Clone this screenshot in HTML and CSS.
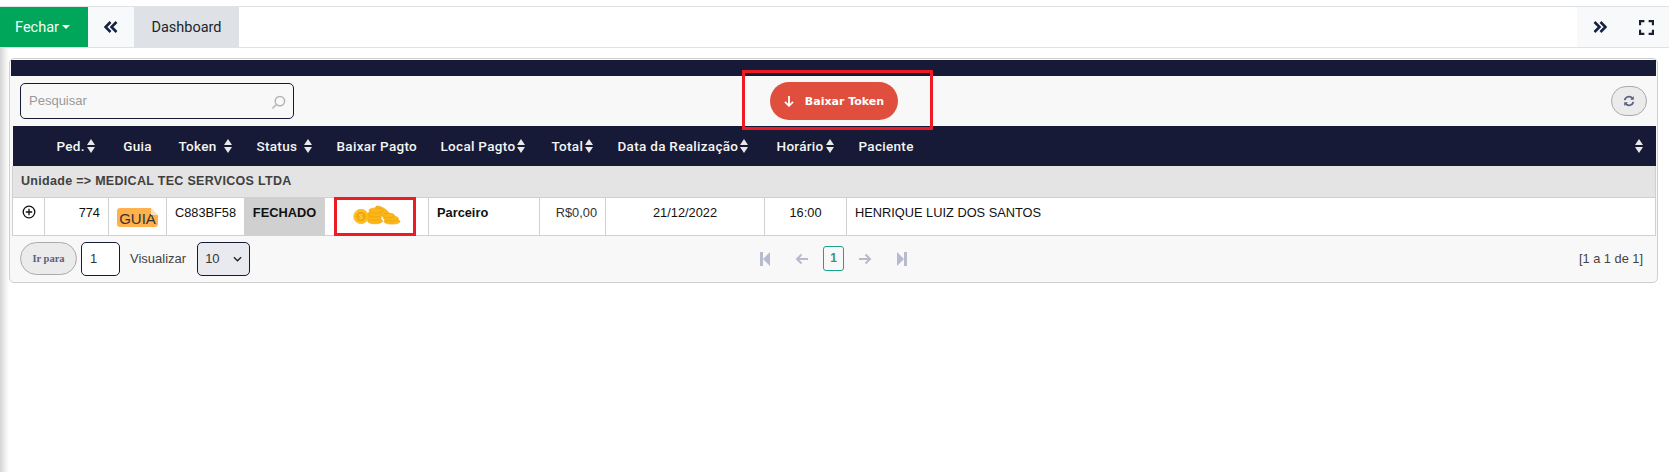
FILE: index.html
```html
<!DOCTYPE html>
<html>
<head>
    <title>Dashboard</title>
    <link rel="stylesheet" href="styles.css">
</head>
<body>
    <!-- Top tabs -->
    <div class="tab-bar">
        <div class="tab-close">Fechar<span class="caret"></span></div>
        <div class="tab-nav">
            <svg class="chevrons" viewBox="0 0 14 12"><path d="M6.5 1 1.5 6l5 5M12.5 1l-5 5 5 5" /></svg>
        </div>
        <div class="tab-active">Dashboard</div>
        <div class="tab-tools">
            <svg class="chevrons" viewBox="0 0 14 12"><path d="M1.5 1l5 5-5 5M7.5 1l5 5-5 5" /></svg>
            <svg class="expand" viewBox="0 0 14 14"><path d="M1 5V1h4M9 1h4v4M13 9v4H9M5 13H1V9" /></svg>
        </div>
    </div>

    <div class="content">
        <div class="panel">
            <div class="panel-strip"></div>

            <!-- Toolbar -->
            <div class="toolbar">
                <div class="search">
                    <span class="search-text">Pesquisar</span>
                    <svg class="search-icon" viewBox="0 0 16 16"><circle cx="9.5" cy="6.5" r="5" /><path d="M5.8 10.2 1.5 14.5" /></svg>
                </div>
                <div class="token-button">
                    <svg class="token-arrow" viewBox="0 0 12 12"><path d="M6 1v9.5M2 6.8l4 4 4-4" /></svg>
                    Baixar Token
                </div>
                <div class="refresh-button">
                    <svg viewBox="0 0 14 14"><path d="M2 6a5 5 0 0 1 9-2M12 8a5 5 0 0 1-9 2" /><path class="solid" d="M12.6 1.2v4.2H8.4zM1.4 12.8V8.6h4.2z" /></svg>
                </div>
            </div>

            <!-- Table -->
            <table class="grid">
                <colgroup>
                    <col class="c-exp"><col class="c-ped"><col class="c-guia"><col class="c-token"><col class="c-status">
                    <col class="c-baixar"><col class="c-local"><col class="c-total"><col class="c-data"><col class="c-hora"><col>
                </colgroup>
                <thead>
                    <tr>
                        <th></th>
                        <th><div class="th-in">Ped.<span class="sort"></span></div></th>
                        <th class="th-center">Guia</th>
                        <th><div class="th-in">Token<span class="sort wide"></span></div></th>
                        <th><div class="th-in">Status<span class="sort wide"></span></div></th>
                        <th>Baixar Pagto</th>
                        <th><div class="th-in">Local Pagto<span class="sort"></span></div></th>
                        <th><div class="th-in">Total<span class="sort"></span></div></th>
                        <th><div class="th-in">Data da Realização<span class="sort"></span></div></th>
                        <th><div class="th-in">Horário<span class="sort"></span></div></th>
                        <th><div class="th-in th-last">Paciente<span class="sort"></span></div></th>
                    </tr>
                </thead>
                <tbody>
                    <tr class="group-row">
                        <td colspan="11">Unidade =&gt; MEDICAL TEC SERVICOS LTDA</td>
                    </tr>
                    <tr class="data-row">
                        <td class="expand-cell">
                            <svg viewBox="0 0 14 14"><circle cx="7" cy="7" r="5.8" /><path d="M3.8 7h6.4M7 3.8v6.4" /></svg>
                        </td>
                        <td class="right">774</td>
                        <td class="guia-cell"><span class="guia-icon">GUIA</span></td>
                        <td class="center">C883BF58</td>
                        <td class="status-cell">FECHADO</td>
                        <td class="coins-cell">
                            <svg viewBox="0 0 48 20">
                                <g fill="#fbb716" stroke="#eb9c0c" stroke-width=".6">
                                    <ellipse cx="39" cy="16.5" rx="8" ry="2.6" />
                                    <ellipse cx="38" cy="13.5" rx="7.5" ry="2.6" />
                                    <ellipse cx="35" cy="10.5" rx="6.5" ry="2.4" />
                                    <ellipse cx="29" cy="5" rx="7" ry="2.4" transform="rotate(28 29 5)" />
                                    <ellipse cx="22" cy="16" rx="7.5" ry="2.8" />
                                    <ellipse cx="21" cy="12.5" rx="7.5" ry="2.8" />
                                    <ellipse cx="22" cy="9" rx="7.5" ry="2.8" />
                                    <ellipse cx="23" cy="5.5" rx="7" ry="2.6" />
                                    <circle cx="8" cy="11.5" r="7.2" fill="#fdc01c" stroke="#f5a90f" />
                                </g>
                                <circle cx="8" cy="11.5" r="4.8" fill="#f2a60c" />
                                <text class="coin-mark" x="8" y="14.3" text-anchor="middle">$</text>
                            </svg>
                        </td>
                        <td class="bold">Parceiro</td>
                        <td class="right money">R$0,00</td>
                        <td class="center">21/12/2022</td>
                        <td class="center">16:00</td>
                        <td>HENRIQUE LUIZ DOS SANTOS</td>
                    </tr>
                </tbody>
            </table>

            <!-- Pagination -->
            <div class="pager-row">
                <div class="pager-left">
                    <div class="go-button">Ir para</div>
                    <div class="page-input">1</div>
                    <span class="view-label">Visualizar</span>
                    <div class="view-select">10
                        <svg viewBox="0 0 10 6"><path d="M1 1l4 4 4-4" /></svg>
                    </div>
                </div>
                <div class="pager-center">
                    <svg class="pg-icon" viewBox="0 0 10 14"><path d="M0 0h3v14H0zM10 0v14L3 7z" /></svg>
                    <svg class="pg-arrow" viewBox="0 0 14 12"><path d="M13 6H2M6.5 1.5 2 6l4.5 4.5" /></svg>
                    <div class="pg-current">1</div>
                    <svg class="pg-arrow" viewBox="0 0 14 12"><path d="M1 6h11M7.5 1.5 12 6l-4.5 4.5" /></svg>
                    <svg class="pg-icon" viewBox="0 0 10 14"><path d="M10 0H7v14h3zM0 0v14l7-7z" /></svg>
                </div>
                <div class="pager-info">[1 a 1 de 1]</div>
            </div>
        </div>

        <!-- Red marks drawn over the screenshot -->
        <div class="mark mark-token"></div>
        <div class="mark mark-coins"></div>
    </div>
</body>
</html>
```

FILE: styles.css
```css
html, body {
    margin: 0;
    height: 100%;
    overflow: hidden;
}

body {
    background: white;
    padding-top: 6px;
    box-sizing: border-box;
    font-family: "Liberation Sans", Arial, sans-serif;
    font-size: 12.8px;
    color: #111;
}

/* Top tabs */
.tab-bar {
    display: flex;
    height: 40px;
    border-top: 1px solid #dee2e6;
    border-bottom: 1px solid #dee2e6;
    font-family: Roboto, sans-serif;
    font-size: 14.5px;
}

.tab-close {
    width: 88px;
    padding-right: 3px;
    box-sizing: border-box;
    background-color: #00a65a;
    color: #f4fff8;
    display: flex;
    align-items: center;
    justify-content: center;
}

.caret {
    margin-left: 3px;
    border-top: 4px solid #f4fff8;
    border-left: 4px solid transparent;
    border-right: 4px solid transparent;
}

.tab-nav {
    width: 46px;
    background-color: #f8f9fa;
    display: flex;
    align-items: center;
    justify-content: center;
}

.tab-active {
    width: 105px;
    background-color: #dee2e6;
    color: #212529;
    display: flex;
    align-items: center;
    justify-content: center;
}

.tab-tools {
    margin-left: auto;
    width: 92px;
    background-color: #f8f9fa;
    display: flex;
    align-items: center;
    padding-left: 16px;
    gap: 32px;
    box-sizing: border-box;
}

.chevrons {
    width: 14px;
    height: 12px;
    fill: none;
    stroke: #14233f;
    stroke-width: 2.6;
}

.expand {
    width: 15px;
    height: 15px;
    fill: none;
    stroke: #172033;
    stroke-width: 2;
}

/* Page area with shadow from the side menu */
.content {
    position: relative;
    height: 424px;
    padding: 10px 11px 0 9px;
    box-sizing: border-box;
    background: linear-gradient(to right, #d4d4d4, #eeeeee 5px, white 9px);
}

.panel {
    height: 225px;
    box-sizing: border-box;
    background-color: #f8f8f8;
    border: 1px solid #cfcfcf;
    border-radius: 5px;
    padding: 1px 1px 0 1px;
    display: flex;
    flex-direction: column;
}

.panel-strip {
    height: 16px;
    background-color: #171a36;
}

/* Toolbar */
.toolbar {
    height: 50px;
    padding: 0 9px 0 9px;
    display: grid;
    grid-template-columns: 1fr auto 1fr;
    align-items: center;
}

.search {
    width: 274px;
    height: 36px;
    box-sizing: border-box;
    border: 1px solid #171a36;
    border-radius: 5px;
    padding: 0 7px 2px 8px;
    display: flex;
    align-items: center;
    justify-content: space-between;
    color: #999;
    font-size: 13px;
}

.search-icon {
    width: 15px;
    height: 15px;
    margin-top: 4px;
    fill: none;
    stroke: #b5b5b5;
    stroke-width: 1.6;
}

.token-button {
    width: 128px;
    height: 38px;
    border-radius: 19px;
    background-color: #e04f3d;
    color: white;
    font-family: "DejaVu Sans", sans-serif;
    font-weight: bold;
    font-size: 11px;
    display: flex;
    align-items: center;
    justify-content: center;
    gap: 10px;
}

.token-arrow {
    width: 12px;
    height: 12px;
    fill: none;
    stroke: white;
    stroke-width: 1.8;
}

.refresh-button {
    justify-self: end;
    width: 36px;
    height: 30px;
    box-sizing: border-box;
    border: 1px solid #aaa;
    border-radius: 15px;
    background-color: #ebebeb;
    display: flex;
    align-items: center;
    justify-content: center;
}

.refresh-button svg {
    width: 12px;
    height: 12px;
    fill: none;
    stroke: #5b5f86;
    stroke-width: 2;
}

.refresh-button .solid {
    fill: #5b5f86;
    stroke: none;
}

/* Table */
.grid {
    width: 1644px;
    margin-left: 1px;
    border-collapse: collapse;
    table-layout: fixed;
}

.c-exp { width: 32px; }
.c-ped { width: 64px; }
.c-guia { width: 58px; }
.c-token { width: 78px; }
.c-status { width: 80px; }
.c-baixar { width: 104px; }
.c-local { width: 111px; }
.c-total { width: 66px; }
.c-data { width: 159px; }
.c-hora { width: 82px; }

.grid th {
    height: 40px;
    padding: 0 0 0 12px;
    background-color: #171a36;
    color: #f4f4f4;
    font-family: Roboto, sans-serif;
    font-weight: 500;
    font-size: 13.5px;
    letter-spacing: .3px;
    text-align: left;
    white-space: nowrap;
    box-sizing: border-box;
}

.grid th.th-center {
    padding: 0;
    text-align: center;
}

.th-in {
    display: flex;
    align-items: center;
}

.th-last {
    justify-content: space-between;
    padding-right: 12px;
}

/* Sort arrows */
.sort {
    display: inline-block;
    position: relative;
    width: 9px;
    height: 14px;
    margin-left: 2px;
}

.sort.wide {
    margin-left: 7px;
}

.sort::before, .sort::after {
    content: "";
    position: absolute;
    left: 0;
    border-left: 4.5px solid transparent;
    border-right: 4.5px solid transparent;
}

.sort::before {
    top: 0;
    border-bottom: 6px solid #e8e8e8;
}

.sort::after {
    bottom: 0;
    border-top: 6px solid #e8e8e8;
}

.group-row td {
    height: 31px;
    padding: 0 0 0 8px;
    background-color: #e4e4e4;
    color: #404040;
    font-weight: bold;
    font-size: 12.5px;
    letter-spacing: .3px;
    box-sizing: border-box;
    border: 1px solid #d0d0d0;
    border-top: none;
}

.data-row td {
    height: 38px;
    box-sizing: border-box;
    background-color: white;
    border: 1px solid #d0d0d0;
    padding: 8px 8px 0 8px;
    vertical-align: top;
    line-height: 14px;
}

.right { text-align: right; }
.center { text-align: center; }
.data-row td.center { padding-left: 0; padding-right: 0; }
.money { color: #333; }

.bold {
    font-weight: bold;
}

.data-row .status-cell {
    background-color: #d0d0d0;
    font-weight: bold;
    text-align: center;
    padding-left: 0;
    padding-right: 0;
}

.data-row .expand-cell {
    padding: 7px 0 0 9px;
}

.expand-cell svg {
    display: block;
    width: 14px;
    height: 14px;
    fill: none;
    stroke: #111;
    stroke-width: 1.3;
}

.data-row .guia-cell {
    padding: 10px 0 0 8px;
}

.guia-icon {
    display: block;
    position: relative;
    width: 41px;
    height: 19px;
    border-radius: 3px;
    background-color: #ffb14e;
    color: #333;
    font-size: 15px;
    line-height: 22px;
    text-align: center;
}

.guia-icon::after {
    content: "";
    position: absolute;
    top: 0;
    right: 0;
    border-top: 7px solid white;
    border-left: 7px solid #ffe0b5;
}

.data-row .coins-cell {
    padding: 7px 0 0 28px;
}

.coins-cell svg {
    display: block;
    width: 48px;
    height: 20px;
}

.coin-mark {
    font-size: 8px;
    fill: #ffd75e;
}

/* Pagination */
.pager-row {
    flex: 1;
    padding: 0 13px 0 9px;
    display: grid;
    grid-template-columns: 1fr auto 1fr;
    align-items: center;
}

.pager-left {
    display: flex;
    align-items: center;
}

.go-button {
    width: 57px;
    height: 33px;
    box-sizing: border-box;
    border: 1px solid #aaa;
    border-radius: 17px;
    background-color: #ebebeb;
    color: #5b5f86;
    font-family: "Liberation Serif", serif;
    font-weight: bold;
    font-size: 10.5px;
    display: flex;
    align-items: center;
    justify-content: center;
}

.page-input {
    width: 39px;
    height: 34px;
    margin-left: 4px;
    box-sizing: border-box;
    border: 1px solid #171a36;
    border-radius: 5px;
    background-color: white;
    padding-left: 8px;
    font-size: 13px;
    color: #333;
    line-height: 32px;
}

.view-label {
    margin-left: 10px;
    color: #444;
    font-size: 13px;
}

.view-select {
    width: 53px;
    height: 34px;
    margin-left: 11px;
    box-sizing: border-box;
    border: 1px solid #171a36;
    border-radius: 5px;
    background-color: #e9e9f0;
    padding: 0 7px 0 7px;
    font-size: 13px;
    color: #333;
    display: flex;
    align-items: center;
    justify-content: space-between;
}

.view-select svg {
    width: 9px;
    height: 6px;
    fill: none;
    stroke: #222;
    stroke-width: 1.5;
}

.pager-center {
    display: flex;
    align-items: center;
    margin-left: 4px;
}

.pg-icon {
    width: 10px;
    height: 14px;
    fill: #b8bacd;
}

.pg-arrow {
    width: 14px;
    height: 12px;
    margin: 0 25px;
    fill: none;
    stroke: #b8bacd;
    stroke-width: 2;
}

.pg-arrow + .pg-current {
    margin-left: -11px;
    margin-right: -11px;
}

.pg-current {
    width: 21px;
    height: 25px;
    box-sizing: border-box;
    border: 1px solid #1aa58a;
    border-radius: 3px;
    color: #3f8f7f;
    font-weight: bold;
    font-size: 12px;
    line-height: 23px;
    text-align: center;
}

.pager-info {
    text-align: right;
    color: #444;
}

/* Red marks */
.mark {
    position: absolute;
    box-sizing: border-box;
    border: 3px solid #ed1c24;
}

.mark-token {
    left: 742px;
    top: 22px;
    width: 191px;
    height: 60px;
}

.mark-coins {
    left: 334px;
    top: 149px;
    width: 82px;
    height: 39px;
}
```
